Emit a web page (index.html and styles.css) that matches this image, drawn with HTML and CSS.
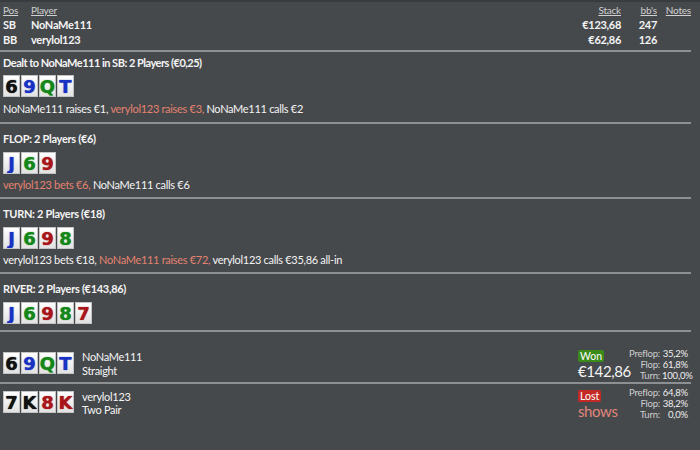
FILE: index.html
```html
<!DOCTYPE html>
<html>
<head>
<meta charset="utf-8">
<link rel="stylesheet" href="styles.css">
</head>
<body>
<div class="page">
  <div class="players">
    <div class="hd">Pos</div><div class="hd">Player</div><div class="hd r">Stack</div><div class="hd r">bb's</div><div class="hd r">Notes</div>
    <div class="b">SB</div><div class="b">NoNaMe111</div><div class="b r">€123,68</div><div class="b r">247</div><div></div>
    <div class="b">BB</div><div class="b">verylol123</div><div class="b r">€62,86</div><div class="b r">126</div><div></div>
  </div>
  <div class="sep"></div>
  <div class="street first">
    <div class="title">Dealt to NoNaMe111 in SB: 2 Players (€0,25)</div>
    <div class="cards"><span class="c s">6</span><span class="c d">9</span><span class="c k">Q</span><span class="c d">T</span></div>
    <div class="act">NoNaMe111 raises €1, <span class="hl">verylol123 raises €3,</span> NoNaMe111 calls €2</div>
  </div>
  <div class="sep"></div>
  <div class="street">
    <div class="title">FLOP: 2 Players (€6)</div>
    <div class="cards"><span class="c d">J</span><span class="c k">6</span><span class="c h">9</span></div>
    <div class="act"><span class="hl">verylol123 bets €6,</span> NoNaMe111 calls €6</div>
  </div>
  <div class="sep"></div>
  <div class="street">
    <div class="title">TURN: 2 Players (€18)</div>
    <div class="cards"><span class="c d">J</span><span class="c k">6</span><span class="c h">9</span><span class="c k">8</span></div>
    <div class="act">verylol123 bets €18, <span class="hl">NoNaMe111 raises €72,</span> verylol123 calls €35,86 all-in</div>
  </div>
  <div class="sep"></div>
  <div class="street river">
    <div class="title">RIVER: 2 Players (€143,86)</div>
    <div class="cards"><span class="c d">J</span><span class="c k">6</span><span class="c h">9</span><span class="c k">8</span><span class="c h">7</span></div>
  </div>
  <div class="sep"></div>
  <div class="show first">
    <div class="cards"><span class="c s">6</span><span class="c d">9</span><span class="c k">Q</span><span class="c d">T</span></div>
    <div class="who"><div>NoNaMe111</div><div>Straight</div></div>
    <div class="res"><span class="badge won">Won</span><div class="amt">€142,86</div></div>
    <div class="eq">
      <span class="l">Preflop:</span><span class="v">35,2%</span>
      <span class="l">Flop:</span><span class="v">61,8%</span>
      <span class="l">Turn:</span><span class="v">100,0%</span>
    </div>
  </div>
  <div class="sep"></div>
  <div class="show second">
    <div class="cards"><span class="c s">7</span><span class="c s">K</span><span class="c h">8</span><span class="c h">K</span></div>
    <div class="who"><div>verylol123</div><div>Two Pair</div></div>
    <div class="res"><span class="badge lost">Lost</span><div class="amt shows">shows</div></div>
    <div class="eq">
      <span class="l">Preflop:</span><span class="v">64,8%</span>
      <span class="l">Flop:</span><span class="v">38,2%</span>
      <span class="l">Turn:</span><span class="v">0,0%</span>
    </div>
  </div>
</div>
</body>
</html>
```
FILE: styles.css
```css
html, body {
  margin: 0;
  padding: 0;
  background: #46494c;
}
body {
  font-family: Lato, "Noto Sans", sans-serif;
  font-size: 11px;
  letter-spacing: -0.3px;
  color: #f4f4f4;
  width: 700px;
  height: 450px;
  overflow: hidden;
  border-top: 2px solid #393c3f;
  box-sizing: border-box;
}
.page {
  display: flex;
  flex-direction: column;
  padding: 0 9px 0 3px;
}
.players {
  display: grid;
  grid-template-columns: 28px 1fr auto 36px 34px;
  line-height: 15px;
  padding-top: 2px;
  margin-bottom: 3px;
}
.hd {
  font-size: 10px;
  letter-spacing: -0.2px;
  color: #d0d0d0;
  text-decoration: underline;
  line-height: 13px;
}
.r { text-align: right; }
.b { font-weight: bold; }
.sep {
  height: 0;
  border-top: 2px solid #8d9093;
  margin-left: -3px;
}
.street {
  display: flex;
  flex-direction: column;
  padding: 7px 0 5px;
}
.street .title { margin-bottom: 5px; }
.street .cards { margin-bottom: 3px; }
.street.first { padding: 3px 0 6px; }
.street.first .title { margin-bottom: 4px; letter-spacing: -0.5px; }
.street.first .cards { margin-bottom: 4px; }
.street.river { padding-bottom: 6px; }
.street.river .cards { margin-bottom: 0; }
.title {
  font-weight: bold;
  line-height: 16px;
}
.act { line-height: 15px; }
.hl { color: #e4826f; }
.cards {
  display: flex;
  gap: 1px;
}
.c {
  width: 15px;
  height: 20px;
  border: 1px solid #c4c4c4;
  background: linear-gradient(#ffffff, #e2e2e2);
  font-family: "DejaVu Sans", sans-serif;
  font-weight: bold;
  font-size: 18px;
  line-height: 21px;
  text-align: center;
  display: block;
  overflow: hidden;
  letter-spacing: -1px;
  text-indent: -1px;
  text-shadow: 0 0 1px currentColor;
}
.s { color: #111; }
.d { color: #1a32c2; }
.k { color: #15871a; }
.h { color: #a8151a; }
.show {
  display: flex;
  align-items: flex-start;
}
.show.first { margin-top: 16px; margin-bottom: 1px; }
.show.second { margin-top: 3px; }
.show .cards { margin-top: 4px; }
.who {
  margin-left: 8px;
  line-height: 14px;
  margin-top: 2px;
}
.show.second .who { margin-top: 3px; line-height: 13px; }
.res {
  margin-left: auto;
  width: 48px;
  padding-top: 1px;
  letter-spacing: 0;
}
.show.second .res { padding-top: 2px; }
.badge {
  display: inline-block;
  color: #fff;
  font-size: 10.5px;
  line-height: 12px;
  padding: 0 2px;
  border-radius: 2px;
}
.won { background: #3b8b1b; }
.lost { background: #c32a25; }
.amt {
  font-size: 15px;
  letter-spacing: -0.4px;
  line-height: 19px;
  white-space: nowrap;
}
.shows { color: #e0857a; }
.eq {
  display: grid;
  grid-template-columns: auto 26px;
  column-gap: 2px;
  font-size: 9.5px;
  letter-spacing: -0.2px;
  line-height: 11px;
  color: #cfcfcf;
  margin-left: 2px;
  margin-right: 3px;
  width: 60px;
  justify-content: end;
}
.eq .l { text-align: right; }
.eq .v { text-align: right; color: #eeeeee; }
```
